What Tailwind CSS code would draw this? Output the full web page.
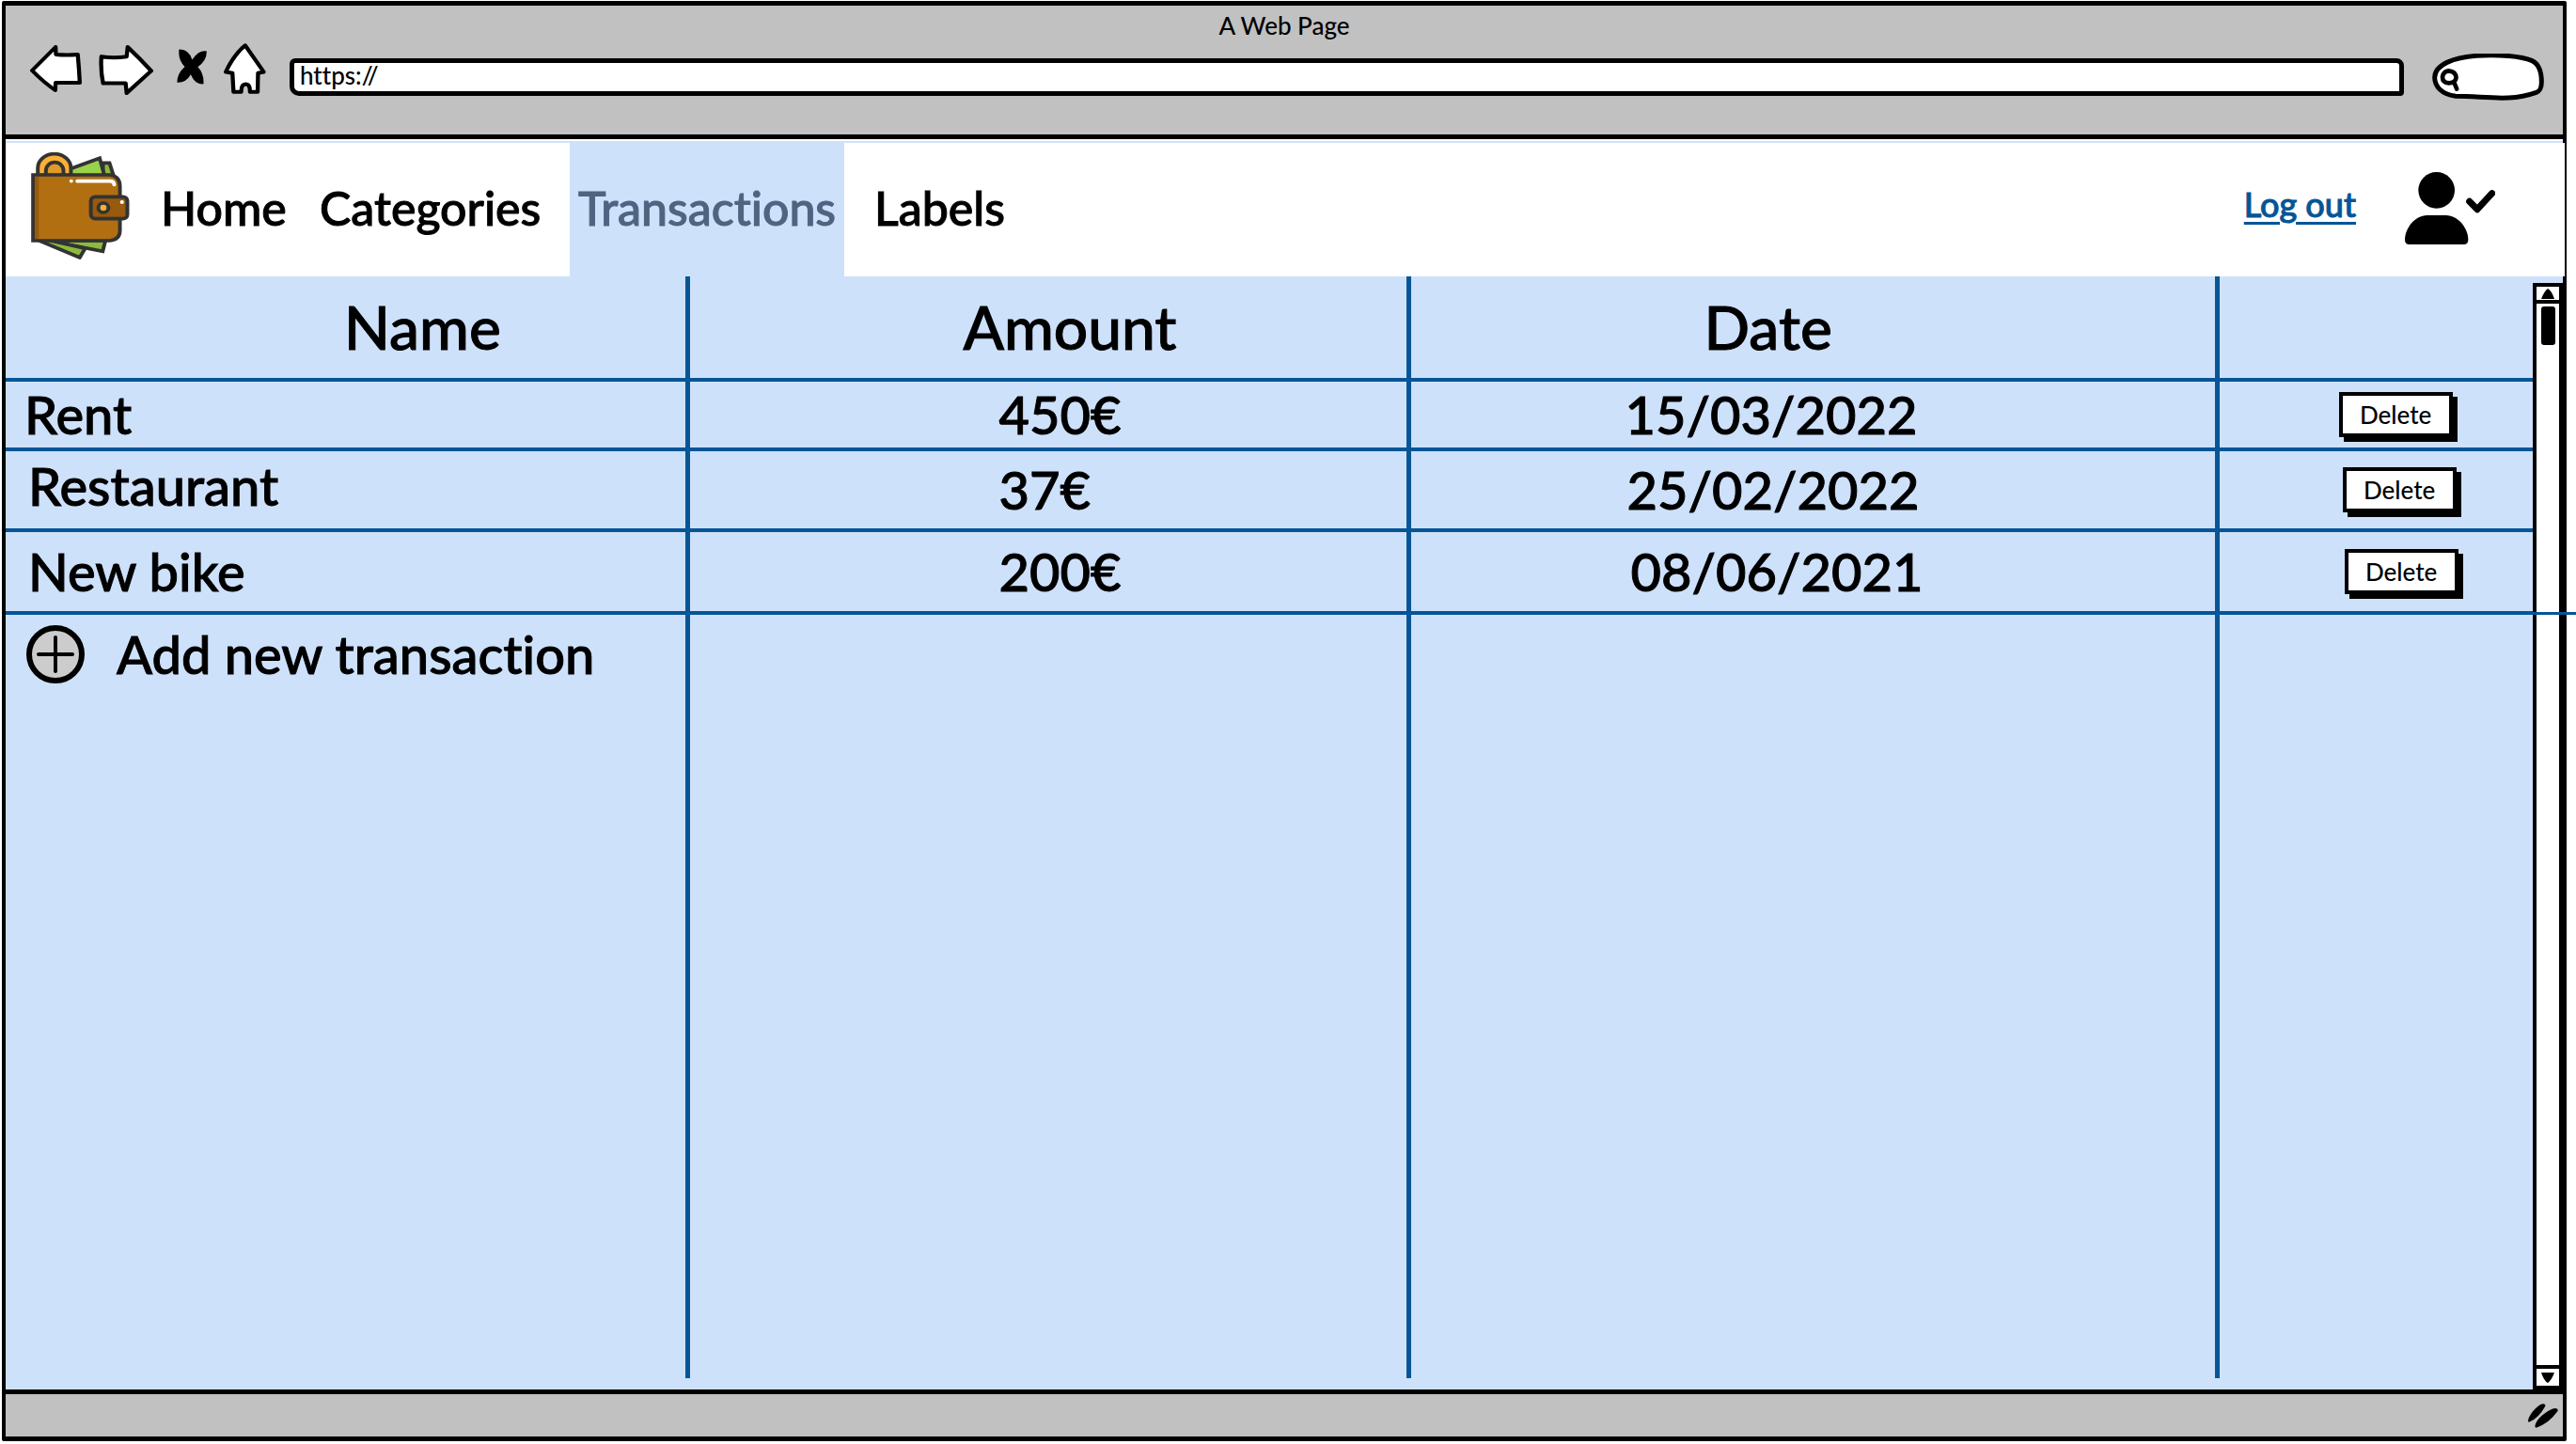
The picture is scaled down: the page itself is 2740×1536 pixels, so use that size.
<!DOCTYPE html>
<html lang="en">
<head>
<meta charset="utf-8">
<title>A Web Page</title>
<script src="https://cdn.jsdelivr.net/npm/@tailwindcss/browser@4"></script>
</head>
<body class="bg-white text-black font-[Lato,sans-serif] font-medium [font-variant-ligatures:none]">
<div class="min-h-screen flex flex-col pt-px pl-[2px] pr-[10px] pb-[3px]">
<div class="relative flex-1 flex flex-col border-[5px] border-r-4 border-l-4 border-black rounded-[2px]">

  <!-- Browser chrome -->
  <header class="bg-[#c1c1c1] h-[142px] border-b-[5px] border-black flex flex-col shrink-0">
    <div class="text-center text-[26px] leading-[42px]">A Web Page</div>
    <div class="flex items-start pl-[26px] pr-5">
      <button aria-label="Back" class="block"><svg class="block w-[55px] h-[50px]" viewBox="90 144 154 150" preserveAspectRatio="none" fill="#fff" stroke="#000" stroke-width="12" stroke-linejoin="round"><path d="M96 225 L166 150 L167 174 Q200 177 232 174 Q236 220 238 264 L166 264 L165 288 Q130 262 96 225Z"/></svg></button>
      <button aria-label="Forward" class="block ml-[18px]"><svg class="block w-[58px] h-[53px]" viewBox="294 144 162 157" preserveAspectRatio="none" fill="#fff" stroke="#000" stroke-width="12" stroke-linejoin="round"><path d="M302 180 Q340 186 377 180 L380 150 Q415 185 450 225 L377 295 L374 264 L307 264 Q299 222 302 180Z"/></svg></button>
      <button aria-label="Stop" class="block ml-[25px] mt-1"><svg class="block w-8 h-[38px]" viewBox="525 155 90 116" preserveAspectRatio="none"><path d="M532 157 Q560 155 571 190 Q590 158 614 162 Q617 190 588 214 Q607 235 605 269 Q580 272 567 238 Q552 266 526 264 Q526 235 549 213 Q528 190 532 157Z"/></svg></button>
      <button aria-label="Home page" class="block ml-[18px] -mt-[2px]"><svg class="block w-[45px] h-[54px]" viewBox="665 138 126 163" preserveAspectRatio="none" fill="#fff" stroke="#000" stroke-width="12" stroke-linejoin="round"><path d="M729 145 L784 230 L767 234 L766 294 L743 294 Q744 269 730 269 Q717 269 717 294 L694 294 L691 234 L671 230 Q695 175 729 145Z"/></svg></button>
      <input aria-label="Address" value="https://" class="block flex-1 ml-[25px] mt-[14px] h-[40px] bg-white border-[5px] border-black rounded-tl-[6px] rounded-bl-[10px] rounded-tr-[8px] rounded-br-[4px] pl-[6px] pb-1 text-[26px] outline-none">
      <label class="relative block ml-[30px] mt-[9px] w-[119px] h-[50px]">
        <svg class="block w-full h-full" viewBox="861 171 359 150" preserveAspectRatio="none" fill="none" stroke="#000" stroke-linecap="round"><path fill="#fff" stroke-width="15" d="M936 307 C890 300 869 275 869 247 C872 160 1120 168 1180 193 C1203 203 1212 230 1212 262 C1212 285 1205 291 1195 295 C1110 325 1040 308 936 307Z"/><path stroke-width="14" d="M914 226 Q897 228 894 245 Q894 264 915 265 Q936 264 938 248 Q937 228 914 226M931 262 L940 284"/></svg>
        <input type="search" aria-label="Search" class="absolute inset-y-2 left-8 right-3 bg-transparent outline-none text-[24px]">
      </label>
    </div>
  </header>

  <!-- Site navigation -->
  <div class="mt-[2px] h-[2px] bg-[#cee1fb] shrink-0"></div>
  <nav class="flex items-stretch h-[142px] shrink-0 bg-white -mr-[2px] relative text-[50px] leading-[56px] [-webkit-text-stroke:1px] [&>*]:shrink-0">
    <svg class="block self-center mb-2 ml-[27px] w-[105px] h-[114px]" viewBox="92 486 292 342" preserveAspectRatio="none" stroke="#333" stroke-width="11" stroke-linejoin="miter">
      <path fill="#8bbb3c" d="M305 520 L324 520 L336 560 L305 560Z"/>
      <path fill="#98d34b" d="M205 540 L295 505 L309 560 L205 565Z"/>
      <path fill="#8bbb3c" d="M175 768 L312 768 L304 802 L175 775Z"/>
      <path fill="#8bbb3c" d="M112 766 L236 822 L252 793 L140 766Z"/>
      <path fill="#fbb034" d="M112 560 V536 A49 45 0 0 1 210 536 V560Z"/>
      <path fill="#de9a2a" d="M136 560 V545 A25 26 0 0 1 188 545 V560Z"/>
      <path fill="#b16f12" d="M98 558 H325 Q355 562 355 595 V735 Q355 765 325 768 H98Z"/>
      <path fill="#985a0c" stroke="none" d="M103 564 h12 v198 h-12z"/>
      <path fill="none" stroke="#fff" stroke-linecap="round" d="M229 578 H325 Q337 578 338 589M211 578v.1"/>
      <rect x="269" y="628" width="108" height="70" rx="13" fill="#985a0c"/>
      <circle cx="306" cy="663" r="15" fill="#fbb034"/><circle cx="361" cy="645" r="6" fill="#fff" stroke="none"/>
    </svg>
    <a href="#" class="ml-[33px] w-[169px] flex items-center pb-1">Home</a>
    <a href="#" class="w-[266px] flex items-center pb-1">Categories</a>
    <a href="#" aria-current="page" class="w-[292px] bg-[#cee1fb] text-[#4f6480] flex items-center justify-center pb-1">Transactions</a>
    <a href="#" class="ml-8 flex items-center pb-1">Labels</a>
    <a href="#" class="ml-auto mr-[52px] self-center mb-3 text-[36px] leading-[44px] text-[#065596] underline decoration-[3px] underline-offset-[5px]">Log out</a>
    <svg class="block self-center mb-1 mr-[74px] w-[96px] h-[77px]" viewBox="774 544 288 231" role="img" aria-label="Signed in"><circle cx="875" cy="602" r="58"/><path d="M845 682 H905 C945 682 976 725 976 760 Q976 775 962 775 H788 Q774 775 774 760 C774 725 805 682 845 682Z"/><path d="M980 638 L1005 663 L1052 612" fill="none" stroke="#000" stroke-width="21" stroke-linecap="round" stroke-linejoin="round"/></svg>
  </nav>

  <!-- Transactions -->
  <main class="relative flex-1 flex bg-[#cee1fb] border-b-[5px] border-black">
    <div class="flex-1 flex pb-3">
      <table class="flex-1 table-fixed border-separate border-spacing-0 text-[56px] leading-[64px] text-left [-webkit-text-stroke:1px] [&_td]:border-[#065596] [&_th]:border-[#065596] [&_tr>*:not(:last-child)]:border-r-[5px] [&_th]:border-b-4 [&_tr:not(:last-child)>td]:border-b-4">
        <colgroup><col class="w-[27.1%]"><col class="w-[28.5%]"><col class="w-[32%]"><col></colgroup>
        <thead class="text-[64px]">
          <tr class="h-[112px]"><th class="font-medium pl-[360px]">Name</th><th class="font-medium pl-[290px]">Amount</th><th class="font-medium pl-[312px]">Date</th><th aria-label="Actions"></th></tr>
        </thead>
        <tbody>
          <tr class="h-[74px]"><td class="pl-5">Rent</td><td class="pl-[328px]">450€</td><td class="pl-[228px]">15/03/2022</td><td class="pl-[127px]"><button class="block w-[121px] h-12 bg-white border-4 border-black shadow-[5px_5px_0_#000] text-[26px] leading-8 [-webkit-text-stroke:0]">Delete</button></td></tr>
          <tr class="h-[86px]"><td class="pl-6 pb-2">Restaurant</td><td class="pl-[328px]">37€</td><td class="pl-[230px]">25/02/2022</td><td class="pl-[131px]"><button class="block w-[121px] h-12 bg-white border-4 border-black shadow-[5px_5px_0_#000] text-[26px] leading-8 [-webkit-text-stroke:0]">Delete</button></td></tr>
          <tr class="h-[88px]"><td class="pl-6">New bike</td><td class="pl-[328px]">200€</td><td class="pl-[234px]">08/06/2021</td><td class="pl-[133px]"><button class="block w-[121px] h-12 bg-white border-4 border-black shadow-[5px_5px_0_#000] text-[26px] leading-8 [-webkit-text-stroke:0]">Delete</button></td></tr>
          <tr><td class="align-top pl-[22px] pt-[10px]"><button class="flex items-center gap-[34px] whitespace-nowrap"><svg class="block w-[62px] h-[62px]" viewBox="0 0 62 62" stroke="#000" stroke-linecap="round"><circle cx="31" cy="31" r="28" fill="#ccc" stroke-width="6"/><path stroke-width="4" d="M31 13v36M13 31h36"/></svg>Add new transaction</button></td><td></td><td></td><td></td></tr>
        </tbody>
      </table>
    </div>
    <div class="mt-[7px] w-8 bg-white border-4 border-black flex flex-col items-center">
      <button aria-label="Scroll up" class="w-full h-[18px] border-b-4 border-black flex items-center justify-center"><svg class="block w-[14px] h-[11px]" viewBox="0 0 14 11"><path d="M0 11 Q3 3 7 0 Q11 2 14 11Z"/></svg></button>
      <div class="mt-[3px] w-[15px] h-[41px] bg-black rounded-[3px]"></div>
      <button aria-label="Scroll down" class="mt-auto w-full h-[22px] border-t-4 border-black flex items-center justify-center"><svg class="block w-[14px] h-[11px]" viewBox="0 0 14 11"><path d="M0 0 H14 Q11 8 7 11 Q3 9 0 0Z"/></svg></button>
    </div>
    <!-- The last rule runs on past the scrollbar to the page edge -->
    <div class="absolute top-[357px] -right-[14px] w-[46px] h-[3px] bg-[#065596]"></div>
  </main>

  <!-- Status bar -->
  <footer class="h-[45px] shrink-0 bg-[#c1c1c1] flex items-center justify-end pr-[5px]">
    <svg class="block w-8 h-[26px]" viewBox="566 294 96 78"><path d="M566 350 Q566 338 582 318 Q602 296 614 295 Q624 295 620 304 Q600 340 572 352 Q566 354 566 350Z M588 368 Q588 352 610 332 Q640 308 654 309 Q664 311 660 319 Q630 360 592 371Z"/></svg>
  </footer>
</div>
</div>
</body>
</html>
